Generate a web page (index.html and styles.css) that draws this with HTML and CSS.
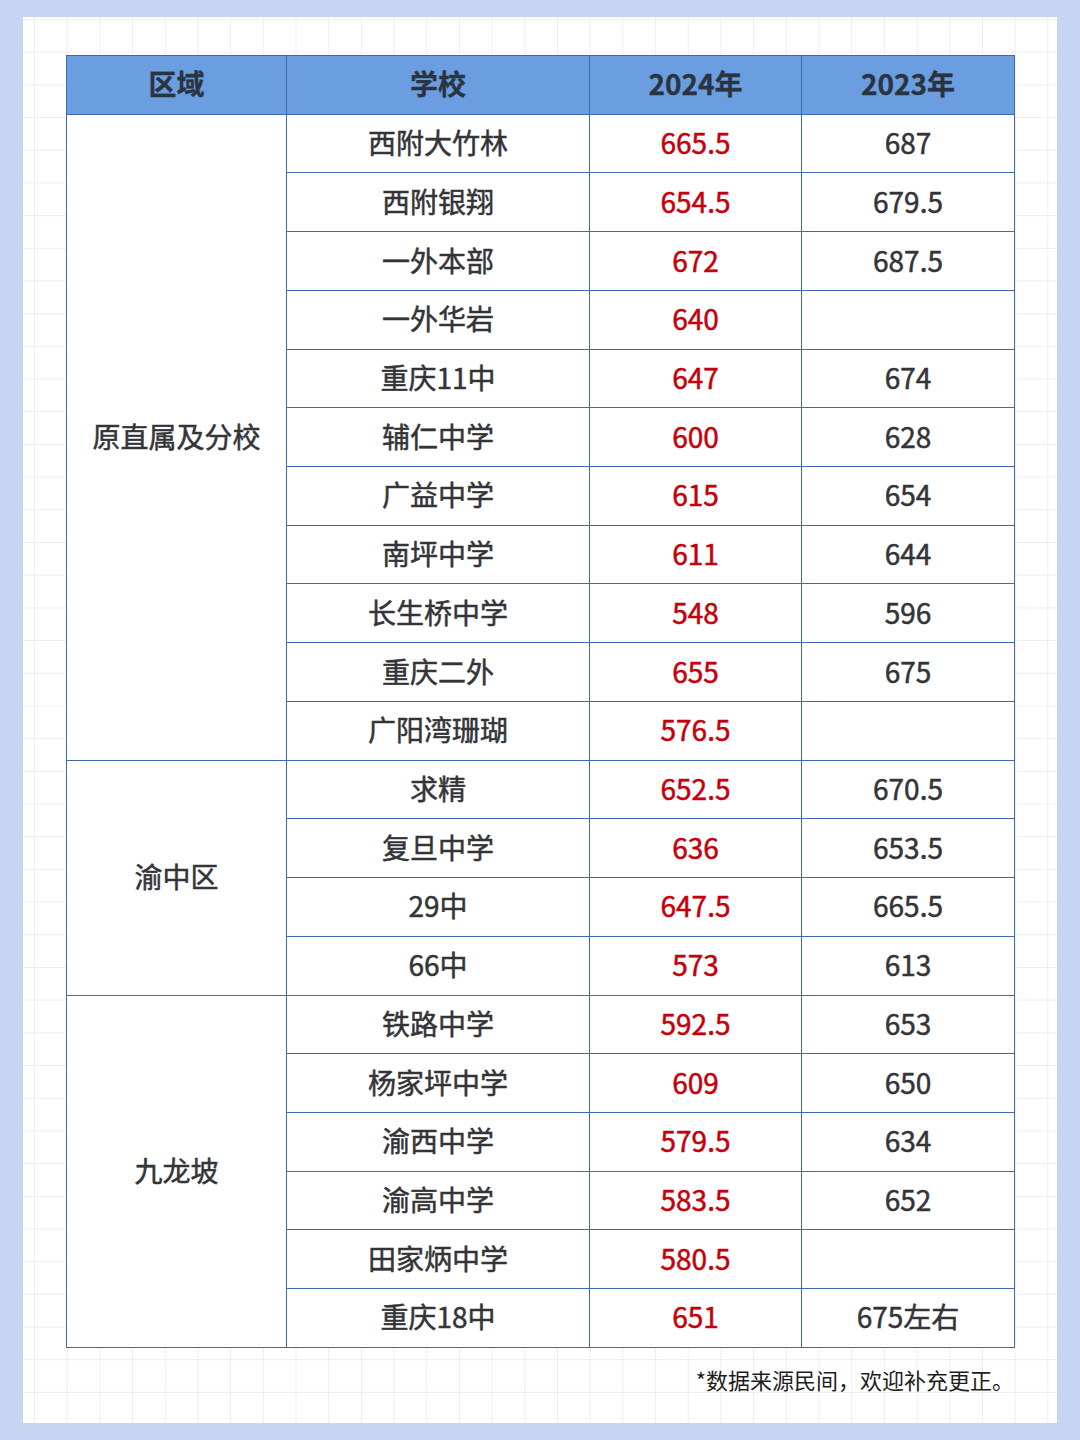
FILE: index.html
```html
<!DOCTYPE html>
<html lang="zh">
<head>
<meta charset="utf-8">
<link rel="stylesheet" href="styles.css">
</head>
<body>
<div class="panel">
  <table class="scores">
    <colgroup>
      <col class="c1"><col class="c2"><col class="c3"><col class="c4">
    </colgroup>
    <thead>
      <tr><th>区域</th><th>学校</th><th>2024年</th><th>2023年</th></tr>
    </thead>
    <tbody>
      <tr><td rowspan="11" class="area">原直属及分校</td><td>西附大竹林</td><td class="red">665.5</td><td>687</td></tr>
      <tr><td>西附银翔</td><td class="red">654.5</td><td>679.5</td></tr>
      <tr><td>一外本部</td><td class="red">672</td><td>687.5</td></tr>
      <tr><td>一外华岩</td><td class="red">640</td><td></td></tr>
      <tr><td>重庆11中</td><td class="red">647</td><td>674</td></tr>
      <tr><td>辅仁中学</td><td class="red">600</td><td>628</td></tr>
      <tr><td>广益中学</td><td class="red">615</td><td>654</td></tr>
      <tr><td>南坪中学</td><td class="red">611</td><td>644</td></tr>
      <tr><td>长生桥中学</td><td class="red">548</td><td>596</td></tr>
      <tr><td>重庆二外</td><td class="red">655</td><td>675</td></tr>
      <tr><td>广阳湾珊瑚</td><td class="red">576.5</td><td></td></tr>
      <tr><td rowspan="4" class="area">渝中区</td><td>求精</td><td class="red">652.5</td><td>670.5</td></tr>
      <tr><td>复旦中学</td><td class="red">636</td><td>653.5</td></tr>
      <tr><td>29中</td><td class="red">647.5</td><td>665.5</td></tr>
      <tr><td>66中</td><td class="red">573</td><td>613</td></tr>
      <tr><td rowspan="6" class="area">九龙坡</td><td>铁路中学</td><td class="red">592.5</td><td>653</td></tr>
      <tr><td>杨家坪中学</td><td class="red">609</td><td>650</td></tr>
      <tr><td>渝西中学</td><td class="red">579.5</td><td>634</td></tr>
      <tr><td>渝高中学</td><td class="red">583.5</td><td>652</td></tr>
      <tr><td>田家炳中学</td><td class="red">580.5</td><td></td></tr>
      <tr><td>重庆18中</td><td class="red">651</td><td>675左右</td></tr>
    </tbody>
  </table>
  <p class="note">*数据来源民间，欢迎补充更正。</p>
</div>
</body>
</html>
```
FILE: styles.css
```css
html, body {
  margin: 0;
  padding: 0;
}
body {
  background: #c6d6f2;
  width: 1080px;
  height: 1440px;
  padding: 17px 23px;
  box-sizing: border-box;
  font-family: "Noto Sans CJK SC", "Noto Sans", sans-serif;
}
.panel {
  height: 1406px;
  box-sizing: border-box;
  padding: 38px 43px 0 43px;
  background-color: #ffffff;
  background-image:
    linear-gradient(to right, #eceef2 1px, transparent 1px),
    linear-gradient(to bottom, #eceef2 1px, transparent 1px);
  background-size: 32.7px 32.7px;
  background-position: 11px 2px;
}
.scores {
  width: 948px;
  border-collapse: collapse;
  table-layout: fixed;
  background: #ffffff;
  border: 1.5px solid #3f68b0;
}
.c1 { width: 220px; }
.c2 { width: 303px; }
.c3 { width: 212px; }
.c4 { width: 213px; }
.scores th, .scores td {
  border: 1.5px solid #3f68b0;
  text-align: center;
  vertical-align: middle;
  height: 58.73px;
  padding: 0 0 3px 0;
  box-sizing: border-box;
  font-size: 28px;
  color: #333438;
  font-weight: 400;
  -webkit-text-stroke: 0.5px currentColor;
}
.scores th {
  background: #6a9ee0;
  color: #2a3340;
  font-weight: 700;
  -webkit-text-stroke: 0.3px currentColor;
}
.scores td.red {
  color: #c4000c;
}
.note {
  margin: 15px 0 0 0;
  text-align: right;
  font-size: 22px;
  color: #1e1e1e;
}
```
